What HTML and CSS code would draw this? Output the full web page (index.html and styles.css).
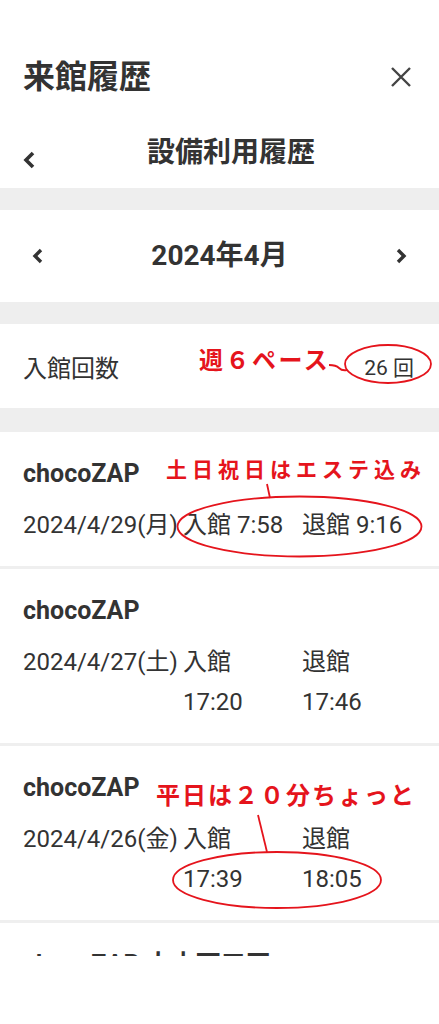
FILE: index.html
```html
<!DOCTYPE html>
<html lang="ja">
<head>
    <meta charset="UTF-8">
    <meta name="viewport" content="width=device-width, initial-scale=1.0">
    <title>来館履歴</title>
    <link rel="stylesheet" href="styles.css">
</head>
<body>

<div class="page">
    <div class="screen">
        <!-- ヘッダー -->
        <header class="top">
            <h1 class="title">来館履歴</h1>
            <span class="close">
                <svg width="20" height="20" viewBox="0 0 20 20"><path d="M1 1 L19 19 M19 1 L1 19" stroke="#444" stroke-width="2.4" fill="none"/></svg>
            </span>
        </header>

        <div class="sub">
            <span class="back">
                <svg width="12" height="18" viewBox="0 0 12 18"><path d="M10 2 L3 9 L10 16" stroke="#333" stroke-width="3.6" fill="none"/></svg>
            </span>
            <h2 class="sub-title">設備利用履歴</h2>
        </div>

        <!-- 月の切り替え -->
        <div class="month">
            <svg width="11" height="16" viewBox="0 0 11 16"><path d="M9 2 L3 8 L9 14" stroke="#333" stroke-width="3.4" fill="none"/></svg>
            <h2 class="month-label">2024年4月</h2>
            <svg width="11" height="16" viewBox="0 0 11 16"><path d="M2 2 L8 8 L2 14" stroke="#333" stroke-width="3.4" fill="none"/></svg>
        </div>

        <div class="count">
            <span>入館回数</span>
            <span class="count-num">26 回</span>
        </div>

        <!-- 履歴一覧 -->
        <ul class="list">
            <li class="entry">
                <p class="shop">chocoZAP</p>
                <div class="detail">
                    <span>2024/4/29(月)</span>
                    <span>入館 <span class="time">7:58</span></span>
                    <span>退館 <span class="time">9:16</span></span>
                </div>
            </li>
            <li class="entry stacked">
                <p class="shop">chocoZAP</p>
                <div class="detail">
                    <span>2024/4/27(土)</span>
                    <span>入館 <span class="time">17:20</span></span>
                    <span>退館 <span class="time">17:46</span></span>
                </div>
            </li>
            <li class="entry stacked">
                <p class="shop">chocoZAP</p>
                <div class="detail">
                    <span>2024/4/26(金)</span>
                    <span>入館 <span class="time">17:39</span></span>
                    <span>退館 <span class="time">18:05</span></span>
                </div>
            </li>
            <li class="entry">
                <p class="shop">chocoZAP 大本西三田</p>
            </li>
        </ul>
    </div>

    <!-- 手書きの注釈 -->
    <svg class="marks" width="439" height="1024" viewBox="0 0 439 1024">
        <g stroke="#e5141c" stroke-width="1.8" fill="none">
            <ellipse cx="388" cy="364" rx="43" ry="19"/>
            <path d="M329 365 q7 0 10 3 t8 2"/>
            <ellipse cx="299.5" cy="526.5" rx="122" ry="30"/>
            <path d="M267 484 L270 498"/>
            <ellipse cx="277" cy="880" rx="104" ry="28"/>
            <path d="M258 815 L267 852"/>
        </g>
    </svg>
    <p class="note note-week">週６ペース</p>
    <p class="note note-holiday">土日祝日はエステ込み</p>
    <p class="note note-weekday">平日は２０分ちょっと</p>
</div>

</body>
</html>
```

FILE: styles.css
```css
body {
    margin: 0;
    font-family: Roboto, "Noto Sans CJK JP", sans-serif;
    color: #333;
    background-color: #fff;
}

.page {
    position: relative;
    width: 439px;
    height: 1024px;
    overflow: hidden;
}

.screen {
    height: 956px;
    overflow: hidden; /* 一覧は下で切れている */
    background-color: #eee;
}

.top {
    display: flex;
    justify-content: space-between;
    align-items: center;
    height: 112px;
    padding: 42px 28px 0 23px;
    box-sizing: border-box;
    background-color: #fff;
}

.title {
    margin: 0;
    font-size: 32px;
    font-weight: 700;
    line-height: 1;
}

.close svg,
.back svg {
    display: block;
}

.sub {
    display: flex;
    align-items: center;
    height: 76px;
    padding: 0 23px;
    background-color: #fff;
}

.back {
    margin-top: 20px;
}

.sub-title {
    flex: 1;
    margin: 0 0 0 11px;
    padding-top: 6px;
    text-align: center;
    font-size: 28px;
    font-weight: 700;
    line-height: 1;
}

.month {
    display: flex;
    justify-content: space-between;
    align-items: center;
    height: 92px;
    margin-top: 22px;
    padding: 0 32px;
    background-color: #fff;
}

.month-label {
    margin: 0;
    font-size: 28px;
    font-weight: 700;
    line-height: 1;
}

.count {
    display: flex;
    justify-content: space-between;
    align-items: center;
    height: 84px;
    margin-top: 22px;
    padding: 0 25px 0 23px;
    font-size: 24px;
    background-color: #fff;
}

.count-num {
    font-size: 21px;
}

.list {
    list-style: none;
    margin: 24px 0 0;
    padding: 0;
    background-color: #fff;
}

.entry {
    padding: 26px 23px 21px;
    border-bottom: 3px solid #efefef;
}

.shop {
    margin: 0 0 15px;
    font-size: 25px;
    font-weight: 700;
    line-height: 32px;
}

.detail {
    display: grid;
    grid-template-columns: 160px 119px 1fr;
    font-size: 24px;
    line-height: 40px;
}

.stacked .time {
    display: block;
}

.marks {
    position: absolute;
    top: 0;
    left: 0;
    pointer-events: none;
}

.note {
    position: absolute;
    margin: 0;
    font-family: "Noto Sans CJK JP", sans-serif;
    font-weight: 700;
    line-height: 1;
    color: #e5141c;
    white-space: nowrap;
}

.note-week {
    top: 347px;
    left: 199px;
    font-size: 24px;
    letter-spacing: 2.5px;
}

.note-holiday {
    top: 458px;
    left: 166px;
    font-size: 21px;
    letter-spacing: 5px;
}

.note-weekday {
    top: 782px;
    left: 156px;
    font-size: 24px;
    letter-spacing: 2px;
}
```
